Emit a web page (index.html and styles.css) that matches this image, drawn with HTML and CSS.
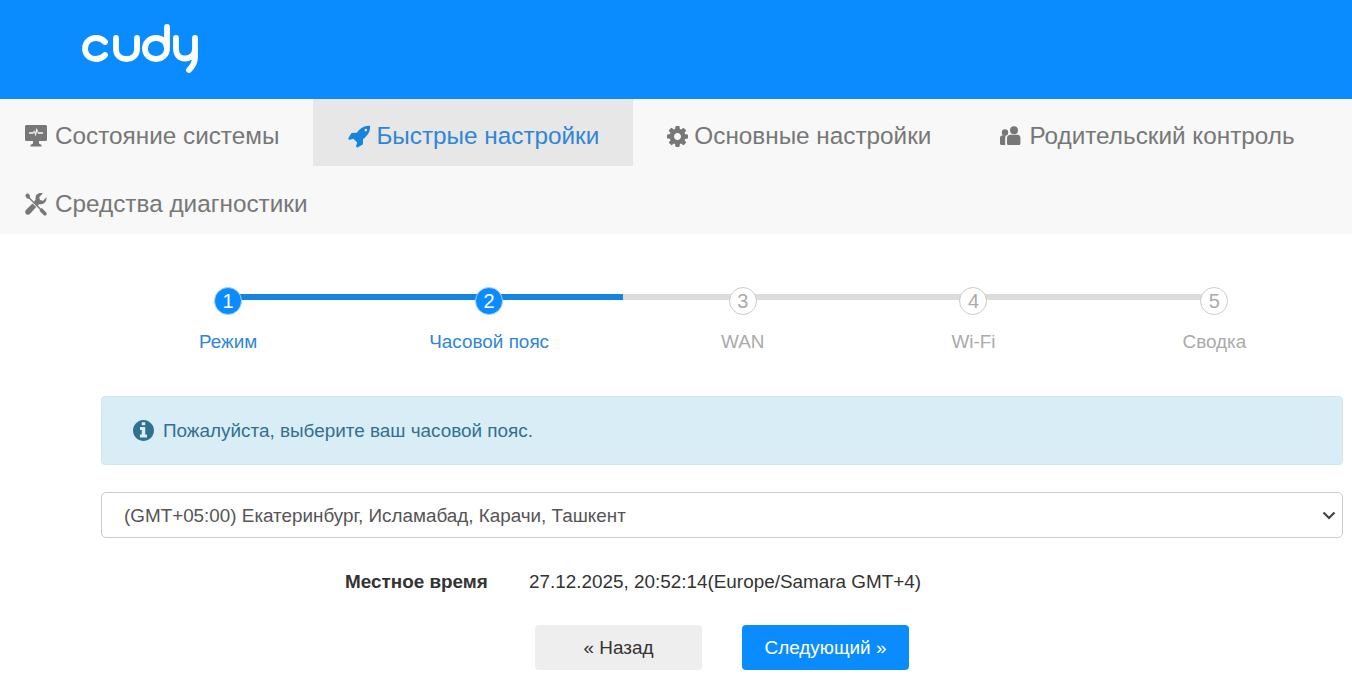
FILE: index.html
```html
<!DOCTYPE html>
<html lang="ru">
<head>
  <meta charset="UTF-8" />
  <meta name="viewport" content="width=device-width, initial-scale=1.0" />
  <title>Cudy</title>
  <link rel="stylesheet" href="styles.css">
</head>
<body>
  <header class="top-bar">
    <svg class="logo" viewBox="0 0 120 50" aria-label="cudy">
      <g fill="none" stroke="#fff" stroke-width="5.800" stroke-linecap="round" stroke-linejoin="round">
        <path d="M25 18C22.500 15.200 19.500 14 16 14 9.500 14 5 18.500 5 24.500S9.500 35 16 35c3.500 0 6.500-1.200 9-4"/>
        <path d="M36 14v11c0 6 4 10 10.500 10S57 31 57 25V14"/>
        <path d="M87 3v21.500C87 31 82 35 76 35s-11-4-11-10.500S70 14 76 14s11 4 11 10.500"/>
        <path d="M96 14v10.500c0 6.500 3.500 10 9 10s10-4 10-9.500M115 14v19.500c0 5-2.500 9-6 12.500"/>
      </g>
    </svg>
  </header>

  <nav class="main-nav">
    <a class="nav-item" href="#">
      <svg class="nav-icon" viewBox="0 0 24 24"><path fill-rule="evenodd" d="M2.500 1h19A1.500 1.500 0 0 1 23 2.500v13a1.500 1.500 0 0 1-1.500 1.500H15v2.500l2.500 1.500v1.500h-11V21L9 19.500V17H2.500A1.500 1.500 0 0 1 1 15.500v-13A1.500 1.500 0 0 1 2.500 1zM5 8.200v1.600h4.200l.9-1.800 1.500 4.500 1.500-5.400.9 2.700H19V8.200h-4.600L12.600 3.800l-1.300 5-1-2.600-1.400 2z"/></svg>
      Состояние системы
    </a>
    <a class="nav-item active" href="#">
      <svg class="nav-icon nav-icon-rocket" viewBox="0 0 1792 1792"><path fill-rule="evenodd" d="M1504 448q0-40-28-68t-68-28-68 28-28 68 28 68 68 28 68-28 28-68zm224-288q0 249-75.500 430.500t-253.500 360.500q-81 80-195 176l-20 379q-2 16-16 26l-384 224q-7 4-16 4-12 0-23-9l-64-64q-13-14-8-32l85-276-281-281-276 85q-3 1-9 1-14 0-23-9l-64-64q-17-19-5-39l224-384q10-14 26-16l379-20q96-114 176-195 188-187 358-258t431-71q14 0 24 9.500t10 22.500z"/></svg>
      Быстрые настройки
    </a>
    <a class="nav-item" href="#">
      <svg class="nav-icon nav-icon-gear" viewBox="128 128 1536 1536"><path fill-rule="evenodd" d="M1152 896q0-106-75-181t-181-75-181 75-75 181 75 181 181 75 181-75 75-181zm512-109v222q0 12-8 23t-20 13l-185 28q-19 54-39 91 35 50 107 138 10 12 10 25t-9 23q-27 37-99 108t-94 71q-12 0-26-9l-138-108q-44 23-91 38-16 136-29 186-7 28-36 28h-222q-14 0-24.500-8.500t-11.500-21.500l-28-184q-49-16-90-37l-141 107q-10 9-25 9-14 0-25-11-126-114-165-168-7-10-7-23 0-12 8-23 15-21 51-66.500t54-70.500q-27-50-41-99l-183-27q-13-2-21-12.500t-8-23.500v-222q0-12 8-23t19-13l186-28q14-46 39-92-40-57-107-138-10-12-10-24 0-10 9-23 26-36 98.500-107.500t94.500-71.500q13 0 26 10l138 107q44-23 91-38 16-136 29-186 7-28 36-28h222q14 0 24.500 8.500t11.500 21.500l28 184q49 16 90 37l142-107q9-9 24-9 13 0 25 10 129 119 165 170 7 8 7 22 0 12-8 23-15 21-51 66.500t-54 70.500q26 50 41 98l183 28q13 2 21 12.500t8 23.500z"/></svg>
      Основные настройки
    </a>
    <a class="nav-item" href="#">
      <svg class="nav-icon nav-icon-users" viewBox="0 0 24 24"><circle cx="6" cy="8.500" r="3.200"/><circle cx="15" cy="6.300" r="4"/><path d="M1 14c0-1.700 1.300-2.700 3-2.700h3c-.5.800-.8 1.700-.8 2.700v7H2.500C1.600 21 1 20.400 1 19.500zM8 14c0-2 1.500-3.300 3.400-3.300h7.200c1.900 0 2.800 1.300 2.800 3.300v5.500c0 1-.7 1.500-1.500 1.500H9.500C8.600 21 8 20.400 8 19.500z"/></svg>
      Родительский контроль
    </a>
    <a class="nav-item" href="#">
      <svg class="nav-icon" viewBox="0 0 24 24"><path d="M3.200 1.300 1.300 3.200l1.300 3 2.700.7 10.900 11-.8.800 4.300 4.400c.8.700 1.800.7 2.500 0 .7-.8.700-1.800 0-2.500L17.900 16l-.9.800L6.200 6l-.7-3.400z"/><path d="M22.600 5.200 19 8.700l-3-.7-.7-3 3.500-3.600c-2.400-.8-4.600-.3-6 1.200-1.200 1.300-1.600 3-1.100 4.700L9.700 10.300l3.700 3.700 2.100-2.100c1.800.6 3.700.2 5.100-1.100 1.600-1.600 2.100-3.900 2-5.600zM8.500 11.400 1.900 18c-1 1-1 2.800 0 3.900s2.900 1.100 4 0l6.300-6.800z"/></svg>
      Средства диагностики
    </a>
  </nav>

  <main class="wizard">
    <div class="steps">
      <div class="steps-track"><div class="steps-done"></div></div>
      <div class="step done"><span class="step-num">1</span><span class="step-label">Режим</span></div>
      <div class="step done"><span class="step-num">2</span><span class="step-label">Часовой пояс</span></div>
      <div class="step"><span class="step-num">3</span><span class="step-label">WAN</span></div>
      <div class="step wide"><span class="step-num">4</span><span class="step-label">Wi-Fi</span></div>
      <div class="step wide"><span class="step-num">5</span><span class="step-label">Сводка</span></div>
    </div>

    <div class="alert">
      <svg class="alert-icon" viewBox="128 128 1536 1536"><path d="M1152 1376v-160q0-14-9-23t-23-9h-96v-512q0-14-9-23t-23-9h-320q-14 0-23 9t-9 23v160q0 14 9 23t23 9h96v320h-96q-14 0-23 9t-9 23v160q0 14 9 23t23 9h448q14 0 23-9t9-23zm-128-896v-160q0-14-9-23t-23-9h-192q-14 0-23 9t-9 23v160q0 14 9 23t23 9h192q14 0 23-9t9-23zm640 416q0 209-103 385.500t-279.500 279.500-385.500 103-385.500-103-279.500-279.500-103-385.500 103-385.500 279.500-279.500 385.500-103 385.500 103 279.500 279.500 103 385.500z"/></svg>
      Пожалуйста, выберите ваш часовой пояс.
    </div>

    <select class="tz-select">
      <option>(GMT+05:00) Екатеринбург, Исламабад, Карачи, Ташкент</option>
    </select>

    <div class="time-row">
      <span class="time-label">Местное время</span>
      <span class="time-value">27.12.2025, 20:52:14(Europe/Samara GMT+4)</span>
    </div>

    <div class="actions">
      <button class="btn btn-back">« Назад</button>
      <button class="btn btn-next">Следующий »</button>
    </div>
  </main>
</body>
</html>
```

FILE: styles.css
```css
:root {
  --blue: #0a8cff;
  --step-blue: #1583e0;
  --link-blue: #2f86d6;
  --grey-text: #777;
}

body {
  margin: 0;
  background: #fff;
  color: #333;
  font-family: "Liberation Sans", Arial, sans-serif;
  overflow: hidden;
}

/* header */
.top-bar {
  display: flex;
  align-items: flex-start;
  height: 99px;
  padding-left: 80px;
  background: var(--blue);
}
.logo {
  width: 120px;
  height: 50px;
  margin-top: 24px;
}

/* nav */
.main-nav {
  display: flex;
  flex-wrap: wrap;
  row-gap: 1px;
  background: #f8f8f8;
  margin-left: -10px;
}
.nav-item {
  display: flex;
  align-items: center;
  gap: 7px;
  box-sizing: border-box;
  height: 67px;
  padding: 7px 34px 0;
  color: var(--grey-text);
  font-size: 24.3px;
  text-decoration: none;
  white-space: nowrap;
}
.nav-item.active {
  background: #e7e7e7;
  color: var(--link-blue);
}
.nav-icon {
  width: 24px;
  height: 24px;
  fill: currentColor;
  flex: none;
}
.nav-icon-gear {
  width: 21px;
  height: 21px;
  margin-right: -1px;
}
.nav-icon-rocket {
  margin-right: -2px;
}
.nav-icon-users {
  margin-right: -1px;
}
.nav-item.active .nav-icon {
  fill: #1583e0;
}

/* steps */
.wizard {
  padding: 0 9px 0 101px;
}
.steps {
  position: relative;
  display: flex;
  gap: 172px;
  margin-left: 98px;
  padding-top: 53px;
  height: 109px;
}
.steps-track {
  position: absolute;
  top: 60px;
  left: 29px;
  width: 985px;
  height: 6px;
  background: #ddd;
}
.steps-done {
  width: 395px;
  height: 100%;
  background: var(--step-blue);
}
.step {
  position: relative;
  display: flex;
  flex-direction: column;
  align-items: center;
  gap: 16px;
  color: #aaa;
  font-size: 18.9px;
  line-height: 22px;
}
.step.wide {
  margin-left: 15px;
}
.step-num {
  box-sizing: border-box;
  width: 28px;
  height: 28px;
  border: 1px solid #ccc;
  border-radius: 50%;
  background: #fff;
  color: #aaa;
  font-size: 20px;
  line-height: 26px;
  text-align: center;
}
.step.done {
  color: var(--link-blue);
}
.step.done .step-num {
  border-color: #9fd0fb;
  background: var(--blue);
  color: #fff;
}

/* alert */
.alert {
  display: flex;
  align-items: center;
  gap: 9px;
  box-sizing: border-box;
  height: 69px;
  padding-left: 31px;
  border: 1px solid #d0e7ee;
  border-radius: 4px;
  background: #d9edf7;
  color: #31708f;
  font-size: 18.9px;
}
.alert-icon {
  width: 21px;
  height: 21px;
  fill: currentColor;
}

/* form */
.tz-select {
  display: block;
  width: 100%;
  height: 46px;
  margin-top: 27px;
  padding: 0 18px 0 22px;
  border: 1px solid #ccc;
  border-radius: 5px;
  appearance: none;
  background: #fff url("data:image/svg+xml,%3Csvg xmlns='http://www.w3.org/2000/svg' width='14' height='9'%3E%3Cpath d='M1.500 1.500 7 7l5.500-5.500' fill='none' stroke='%23444' stroke-width='2.200'/%3E%3C/svg%3E") no-repeat right 6px center;
  color: #555;
  font-family: inherit;
  font-size: 18.85px;
}
.time-row {
  display: flex;
  gap: 41px;
  margin-top: 33px;
  padding-left: 244px;
  font-size: 18.9px;
  line-height: 22px;
}
.time-label {
  font-weight: bold;
}
.actions {
  display: flex;
  gap: 40px;
  margin-top: 32px;
  padding-left: 434px;
}
.btn {
  width: 167px;
  height: 45px;
  border: none;
  border-radius: 4px;
  font-family: inherit;
  font-size: 18.9px;
}
.btn-back {
  background: #eee;
  color: #333;
}
.btn-next {
  background: var(--blue);
  color: #fff;
}
```
